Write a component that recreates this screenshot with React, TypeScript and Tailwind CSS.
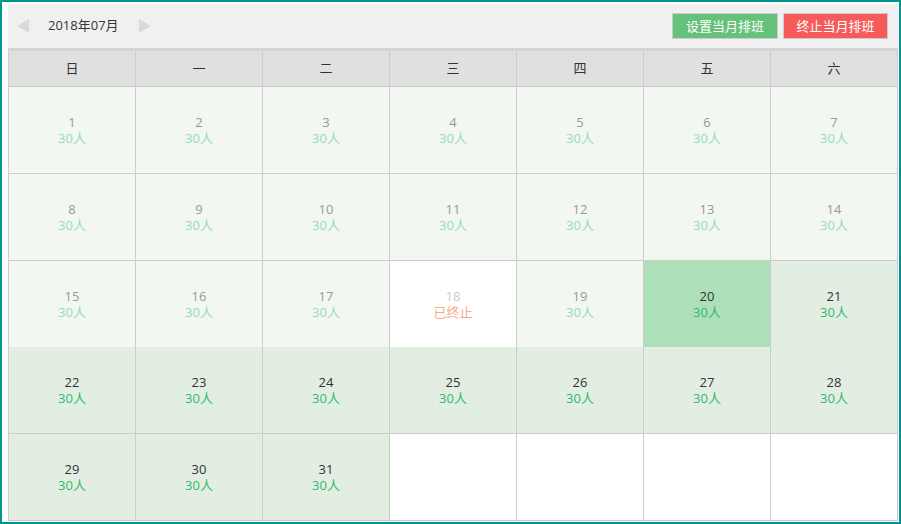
import React from "react";

type Cell = { d?: number; kind: "past" | "future" | "today" | "stopped" | "empty" };

const weeks: Cell[][] = (() => {
  const cells: Cell[] = [];
  for (let d = 1; d <= 31; d++) {
    let kind: Cell["kind"] = "past";
    if (d === 18) kind = "stopped";
    else if (d === 20) kind = "today";
    else if (d > 20) kind = "future";
    cells.push({ d, kind });
  }
  while (cells.length < 35) cells.push({ kind: "empty" });
  const rows: Cell[][] = [];
  for (let i = 0; i < 5; i++) rows.push(cells.slice(i * 7, i * 7 + 7));
  return rows;
})();

const bgFor: Record<Cell["kind"], string> = {
  past: "bg-[#f2f7f2]",
  future: "bg-[#e3eee3]",
  today: "bg-[#ade0b8]",
  stopped: "bg-white",
  empty: "bg-white",
};

function DayCell({ c }: { c: Cell }) {
  return (
    <div className={`flex flex-col items-center justify-center border-r border-[#cccccc] ${bgFor[c.kind]}`}>
      {c.kind !== "empty" && (
        <>
          <div
            className={`text-[13px] leading-[16px] ${
              c.kind === "past" ? "text-[#999999]" : c.kind === "stopped" ? "text-[#cccccc]" : "text-[#333333]"
            }`}
          >
            {c.d}
          </div>
          <div
            className={`text-[13px] leading-[16px] ${
              c.kind === "past"
                ? "text-[#94dcbb]"
                : c.kind === "stopped"
                ? "text-[#f7a98a]"
                : "text-[#2fba6c]"
            }`}
          >
            {c.kind === "stopped" ? "已终止" : "30人"}
          </div>
        </>
      )}
    </div>
  );
}

export default function App() {
  const days = ["日", "一", "二", "三", "四", "五", "六"];
  return (
    <div
      className="w-[901px] h-[524px] border-2 border-[#00968f] bg-white pl-[6px] pt-[2px] pr-[1px] pb-[1px] text-[#333333]"
      style={{ fontFamily: '"Open Sans", "Noto Sans CJK SC", sans-serif' }}
    >
      <div className="w-[890px]">
        <div className="h-[44px] bg-[#f0f0f0] flex items-center border-b-[3px] border-[#d4d4d4] box-content">
          <div className="ml-[9px] w-0 h-0 border-y-[7.5px] border-y-transparent border-r-[12px] border-r-[#d9d9d9]" />
          <div className="ml-[19px] text-[13px]">2018年07月</div>
          <div className="ml-[20px] w-0 h-0 border-y-[7.5px] border-y-transparent border-l-[12px] border-l-[#d9d9d9]" />
          <div className="flex-1" />
          <button className="h-[26px] w-[106px] bg-[#66c27a] border border-[#cccccc] text-white text-[13px] leading-none">
            设置当月排班
          </button>
          <button className="ml-[5px] mr-[10px] h-[26px] w-[105px] bg-[#f55b5b] border border-[#cccccc] text-white text-[13px] leading-none">
            终止当月排班
          </button>
        </div>
        <div className="border-l border-[#cccccc]">
          <div className="grid grid-cols-[repeat(7,127px)] h-[36px] border-b border-[#cccccc] bg-[#e0e0e0]">
            {days.map((d) => (
              <div key={d} className="flex items-center justify-center border-r border-[#cccccc] text-[13px]">
                {d}
              </div>
            ))}
          </div>
          {weeks.map((row, i) => (
            <div
              key={i}
              className={`grid grid-cols-[repeat(7,127px)] ${i === 2 ? "h-[86px]" : "h-[87px] border-b border-[#cccccc]"}`}
            >
              {row.map((c, j) => (
                <DayCell key={j} c={c} />
              ))}
            </div>
          ))}
        </div>
      </div>
    </div>
  );
}
